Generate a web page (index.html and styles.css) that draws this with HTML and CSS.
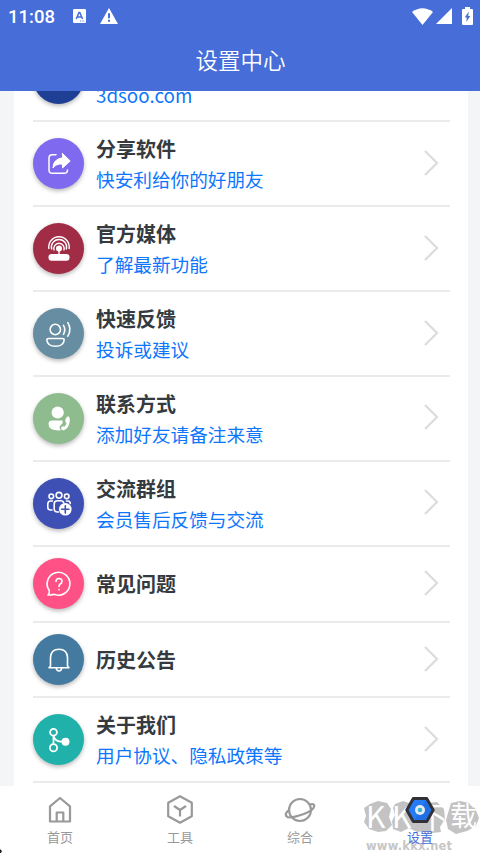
FILE: index.html
```html
<!DOCTYPE html>
<html lang="zh-CN">
<head>
<meta charset="utf-8">
<title>设置中心</title>
<link rel="stylesheet" href="styles.css">
</head>
<body>
<header class="header">
  <div class="status">
    <span class="clock">11:08</span>
    <svg class="st-a" width="13" height="14" viewBox="0 0 13 14"><rect width="13" height="14" rx="1.2" fill="#fff"/><path d="M3.200 10 6 3.500h.8L9.600 10M4.400 8h4" fill="none" stroke="#466dd8" stroke-width="1.500"/><path d="M7 12h4.500" stroke="#466dd8" stroke-width=".8" stroke-dasharray="1 .7"/></svg>
    <svg class="st-warn" width="18" height="16" viewBox="0 0 18 16"><path d="M9 0 18 16H0z" fill="#fff"/><path d="M9 5.300v5M9 11.700v2" stroke="#466dd8" stroke-width="2"/></svg>
    <svg class="st-wifi" width="21" height="17" viewBox="0 0 21 17"><path d="M0 4Q10.500-3.500 21 4L10.500 17z" fill="#fff"/></svg>
    <svg class="st-cell" width="16" height="16" viewBox="0 0 16 16"><path d="M16 0v16H0z" fill="#fff"/></svg>
    <svg class="st-bat" width="11" height="18" viewBox="0 0 11 18"><path d="M3 0h5v2h2q1 0 1 1v14q0 1-1 1H1q-1 0-1-1V3q0-1 1-1h2z" fill="#fff"/><path d="M6.700 4.500 2.800 10.500h2L4.300 15l4-6H6.200z" fill="#466dd8"/></svg>
  </div>
  <h1 class="title">设置中心</h1>
</header>
<main class="page">
  <div class="card">
    <div class="row">
      <div class="disc navy"></div>
      <div class="text"><b>官方网站</b><span class="latin">3dsoo.com</span></div>
    </div>
    <div class="row">
      <div class="disc violet"><svg width="30" height="30" viewBox="0 0 30 30" fill="none" stroke="#fff" stroke-width="1.500" stroke-linecap="round"><path d="M12 5.700H8.200Q5 5.700 5 9v12q0 3.300 3.200 3.300h12q3.300 0 3.300-3.300"/><path d="M18.500 4.500 26.200 12l-7.700 7v-4Q12 14.500 9 19q0-9 9.500-10.300z" fill="#fff" stroke-width="1" stroke-linejoin="round"/></svg></div>
      <div class="text"><b>分享软件</b><span>快安利给你的好朋友</span></div>
      <svg class="arrow" viewBox="0 0 16 28"><path d="M2 2 14 14 2 26"/></svg>
    </div>
    <div class="row">
      <div class="disc red"><svg width="30" height="30" viewBox="0 0 30 30" fill="none" stroke="#fff" stroke-width="1.400"><rect x="4.500" y="20" width="21" height="6.800" rx="3" fill="#fff" stroke="none"/><circle cx="15" cy="14.500" r="3" fill="#fff" stroke="none"/><path d="M15 14v7M10.200 16.500A5.200 5.200 0 1 1 19.800 16.500M7.800 15.500A7.600 7.600 0 1 1 22.200 15.500M5 15a10.200 10.200 0 1 1 20 0"/></svg></div>
      <div class="text"><b>官方媒体</b><span>了解最新功能</span></div>
      <svg class="arrow" viewBox="0 0 16 28"><path d="M2 2 14 14 2 26"/></svg>
    </div>
    <div class="row">
      <div class="disc slate"><svg width="30" height="30" viewBox="0 0 30 30" fill="none" stroke="#fff" stroke-width="1.600" stroke-linecap="round"><circle cx="11.300" cy="10.500" r="5.200"/><path d="M4.500 19.500h14q1.700 0 1.700 1.500-.7 6.300-8.700 6.300T2.800 21q0-1.500 1.700-1.500zM19.500 6.300q2.500 4 0 9M23.800 3.700q4.200 6.800 0 13.500"/></svg></div>
      <div class="text"><b>快速反馈</b><span>投诉或建议</span></div>
      <svg class="arrow" viewBox="0 0 16 28"><path d="M2 2 14 14 2 26"/></svg>
    </div>
    <div class="row">
      <div class="disc green"><svg width="30" height="30" viewBox="0 0 30 30"><circle cx="13.700" cy="9.500" r="6.100" fill="#fff"/><path d="M8 17.500h10.500q.8 2.500-1 4-2 1-2 3.200 1 1.300 1 2.800Q4.500 28 4.500 21q0-3.500 3.500-3.500z" fill="#fff"/><path d="M23.300 13.500h1.500q1.300 1 1 4.300-.7 7.200-5.500 9.200-2 .8-2.800-.5l-.5-1.500q.3-1.400 2-1.700l1.300.5q1.500-1 2.200-3.500l-1-1.300q-.8-2 .5-3.800z" fill="#fff"/></svg></div>
      <div class="text"><b>联系方式</b><span>添加好友请备注来意</span></div>
      <svg class="arrow" viewBox="0 0 16 28"><path d="M2 2 14 14 2 26"/></svg>
    </div>
    <div class="row">
      <div class="disc indigo"><svg width="30" height="30" viewBox="0 0 30 30" fill="none" stroke="#fff" stroke-width="1.600" stroke-linecap="round"><circle cx="7.300" cy="8.300" r="2.300"/><circle cx="15" cy="7.300" r="2.900"/><circle cx="22.700" cy="8.300" r="2.300"/><path d="M8.500 13H6.800q-3 0-3 3v3.500q0 2.500 3 2.500H8M14.500 24h-1q-3.300 0-3.300-3.300V16q0-3.200 3.300-3.200h3.200q2.600 0 3 2M22.500 13h1.500q2 0 2.300 2.500"/><circle cx="21.300" cy="21.300" r="6.300" fill="#fff" stroke="none"/><path d="M17.700 21.300h7.200M21.300 17.700v7.200" stroke="#3f50b5"/></svg></div>
      <div class="text"><b>交流群组</b><span>会员售后反馈与交流</span></div>
      <svg class="arrow" viewBox="0 0 16 28"><path d="M2 2 14 14 2 26"/></svg>
    </div>
    <div class="row short">
      <div class="disc pink"><svg width="30" height="30" viewBox="0 0 30 30" fill="none" stroke="#fff" stroke-width="1.600" stroke-linecap="round" stroke-linejoin="round"><path d="M4 26q1.800-2 1.200-4.700A11.400 11.400 0 1 1 10 25.200Q7.500 26.300 4 26z"/><path d="M12 12.500Q12 9.500 15 9.500t3 2.800q0 1.700-1.700 2.700-1.300.8-1.300 2.500M15 20.500v.2"/></svg></div>
      <div class="text"><b>常见问题</b></div>
      <svg class="arrow" viewBox="0 0 16 28"><path d="M2 2 14 14 2 26"/></svg>
    </div>
    <div class="row short">
      <div class="disc steel"><svg width="30" height="30" viewBox="0 0 30 30" fill="none" stroke="#fff" stroke-width="1.600" stroke-linecap="round" stroke-linejoin="round"><path d="M6.500 21v-8.500Q7 4.300 15 4.300t8.500 8.200V21l1.500 1.700H5zM12.300 23q.3 3 2.700 3t2.700-3"/></svg></div>
      <div class="text"><b>历史公告</b></div>
      <svg class="arrow" viewBox="0 0 16 28"><path d="M2 2 14 14 2 26"/></svg>
    </div>
    <div class="row">
      <div class="disc teal"><svg width="30" height="30" viewBox="0 0 30 30" fill="none" stroke="#fff" stroke-width="1.800"><circle cx="9.500" cy="7.300" r="3.400"/><circle cx="9.500" cy="22.700" r="3.600"/><path d="M9.500 10.700v8.400M9.500 11q1.500 5.700 8.500 5.700"/><circle cx="21.500" cy="16.700" r="4" fill="#fff" stroke="none"/></svg></div>
      <div class="text"><b>关于我们</b><span>用户协议、隐私政策等</span></div>
      <svg class="arrow" viewBox="0 0 16 28"><path d="M2 2 14 14 2 26"/></svg>
    </div>
  </div>
</main>
<nav class="tabs">
  <div class="tab"><svg width="32" height="32" viewBox="0 0 32 32" fill="none" stroke="#999" stroke-width="2.200" stroke-linejoin="round"><path d="M6 27.500V12.300L16 4l10 8.300v15.200z"/><path d="M12.700 27v-8.500h6.600V27"/></svg><span>首页</span></div>
  <div class="tab"><svg width="32" height="32" viewBox="0 0 32 32" fill="none" stroke="#999" stroke-width="2.200" stroke-linejoin="round"><path d="M16 2.300 27.800 8.800v13.400L16 28.700 4.200 22.200V8.800z"/><path d="m10 12 6 4 6-4M16 16v6.500"/></svg><span>工具</span></div>
  <div class="tab"><svg width="32" height="32" viewBox="0 0 32 32" fill="none" stroke="#999" stroke-width="2.100"><circle cx="16" cy="16" r="11"/><path d="M25.500 10.500q5-1.200 4.800 1.500-.8 4.500-10.500 8T4.500 23.500Q1 22 2 19.500t4-4"/></svg><span>综合</span></div>
  <div class="tab active"><svg width="32" height="32" viewBox="0 0 32 32"><path d="M9.300 4.500h13.400L29.200 16l-6.500 11.500H9.300L2.800 16z" fill="#267af5" stroke="#303238" stroke-width="3" stroke-linejoin="round"/><path d="M21.800 6.300 27 16l-5.200 9.700H11z" fill="#1762d7" opacity=".45"/><circle cx="16" cy="16" r="5" fill="#e6ecee"/><circle cx="16" cy="16" r="2.300" fill="#35b5d3"/></svg><span>设置</span></div>
  <div class="mark">
    <svg class="blobs" width="117" height="34" viewBox="0 0 117 34" fill="#c3c3c3"><path d="M7 4 15 1l9 2 4 6-2 8 3 8-6 6-8 1-9-3-5-7 2-6-2-8z"/><path d="m32 4 8-3 9 3 3 8 10-9 12-1 7 7 1 10-5 8 1 5-9 1-6-2-9 1-8-4-8 4-8-3-1-8 3-6-2-7z"/><path d="m88 3 9-2 9 2 6 5 4 10-3 8-9 5-11 3-8-5-2-9 2-7z"/></svg>
    <span class="mark-name"><i>K</i><i>K</i><i>下</i><i>载</i></span>
    <span class="mark-url">www.kkx.net</span>
  </div>
  <svg class="corner" width="3" height="4" viewBox="0 0 3 4"><path d="M0 0 2 2 1 4H0z" fill="#222"/></svg>
</nav>
</body>
</html>
```
FILE: styles.css
```css
* { box-sizing: border-box; }
body {
  margin: 0;
  width: 480px;
  height: 853px;
  overflow: hidden;
  display: flex;
  flex-direction: column;
  background: #f4f5f7;
  font-family: "Noto Sans CJK SC", sans-serif;
}
.header {
  height: 90.500px;
  flex: none;
  background: #466dd8;
  color: #fff;
}
.status {
  height: 32px;
  display: flex;
  align-items: center;
  padding: 0 8px;
}
.clock { font: 500 18.500px/34px Roboto, sans-serif; width: 65px; height: 32px; }
.st-warn { margin-left: 14px; }
.st-wifi { margin-left: auto; }
.st-cell { margin-left: 3px; }
.st-bat { margin-left: 10px; margin-right: -1px; }
.title {
  margin: 10px 0 0;
  padding-left: 1px;
  font-size: 22.500px;
  line-height: 34px;
  font-weight: 350;
  text-align: center;
}
.page {
  height: 695.500px;
  flex: none;
  overflow: hidden;
  padding: 0 12px 0 14px;
  display: flex;
  flex-direction: column;
  justify-content: flex-end;
}
.card {
  flex: none;
  background: #fff;
  padding: 0 18px 2.700px 19px;
}
.row {
  height: 84.900px;
  display: flex;
  align-items: center;
  border-bottom: 2px solid #ebebeb;
}
.row.short { height: 75.800px; }
.disc {
  width: 51px;
  height: 51px;
  flex: none;
  border-radius: 50%;
  display: flex;
  align-items: center;
  justify-content: center;
  box-shadow: 0 2px 4px rgba(0, 0, 0, .28);
}
.navy { background: #1e3f94; }
.violet { background: #7f69ef; }
.red { background: #a02c45; }
.slate { background: #668da1; }
.green { background: #8fbc8f; }
.indigo { background: #3f50b5; }
.pink { background: #ff5186; }
.steel { background: #447a9f; }
.teal { background: #20b2aa; }
.text {
  margin-left: 12px;
  flex: 1;
  display: flex;
  flex-direction: column;
}
.text b {
  font-size: 20px;
  line-height: 30px;
  font-weight: 700;
  color: #343a40;
}
.text span {
  font-size: 18.650px;
  line-height: 28px;
  margin-top: 1px;
  color: #0d76fb;
}
.short .text { padding-top: 1px; }
.text .latin { font-size: 18.800px; margin-top: 2px; }
.arrow {
  width: 16px;
  height: 28px;
  margin: 0 11px 2px 0;
  fill: none;
  stroke: #ddd;
  stroke-width: 2.300;
}
.tabs {
  position: relative;
  flex: 1;
  display: flex;
  background: #fff;
}
.tab {
  width: 120.200px;
  display: flex;
  flex-direction: column;
  align-items: center;
  padding-top: 8px;
}
.tab span {
  font-size: 13px;
  line-height: 20px;
  margin-top: 1px;
  color: #999;
}
.tab.active > * { position: relative; z-index: 1; }
.tab.active span { color: #466dd8; }
.mark {
  position: absolute;
  left: 363px;
  top: 14px;
  width: 117px;
  height: 53px;
}
.blobs { display: block; }
.mark-name {
  position: absolute;
  left: 3px;
  top: -2px;
  display: flex;
  color: #fff;
  font-size: 30px;
  line-height: 34px;
}
.mark-name i {
  width: 26px;
  font-style: normal;
  font-weight: 400;
}
.mark-name i:nth-child(3) { width: 32px; }
.mark-name i:nth-child(4) { width: 28px; font-size: 27px; }
.mark-url {
  position: absolute;
  left: 3px;
  top: 39px;
  font: 700 11.500px/14px "DejaVu Sans", sans-serif;
  letter-spacing: .2px;
  color: #c6c6c6;
}
.corner { position: absolute; left: 0; bottom: 0; }
```
